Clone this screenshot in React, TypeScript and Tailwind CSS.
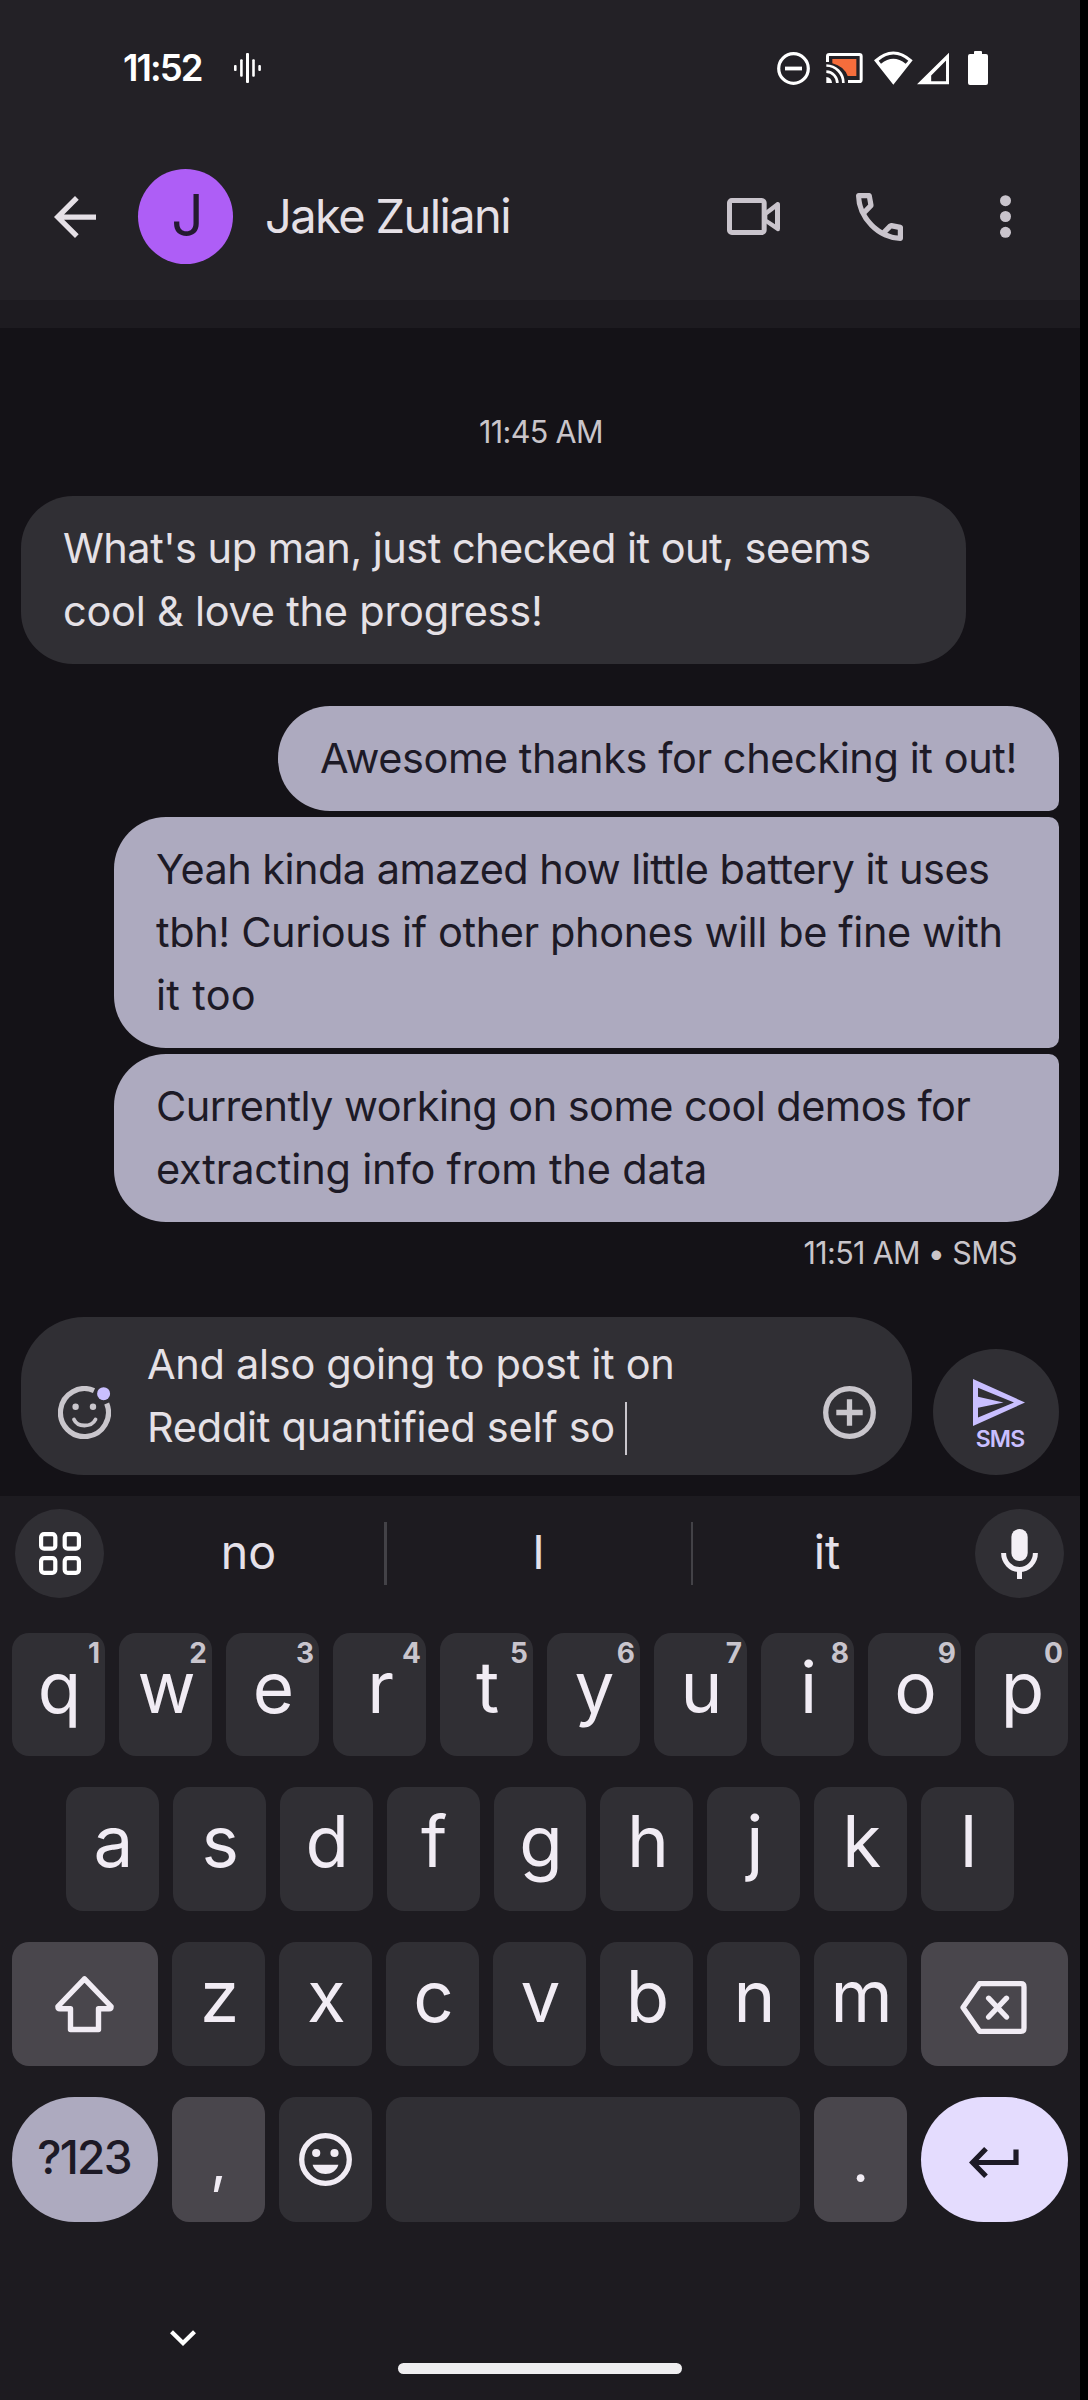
import React from 'react';

type Line = { text: string; tracking: string };

function Lines({ lines }: { lines: Line[] }) {
  return (
    <>
      {lines.map((l) => (
        <div key={l.text} className={`whitespace-nowrap text-[41.5px] leading-[63px] ${l.tracking}`}>
          {l.text}
        </div>
      ))}
    </>
  );
}

function StatusBar() {
  return (
    <div className="flex h-[136px] items-center pl-[123px] text-white">
      <span className="w-[79px] whitespace-nowrap text-[36.5px] leading-[40px] font-semibold tracking-[-1.9px]">11:52</span>
      <svg className="ml-[31.5px] h-[30px] w-[27px]" viewBox="0 0 27 30" fill="currentColor">
        <rect x="0" y="12" width="2.6" height="6" rx="1" />
        <rect x="6.1" y="6.3" width="2.6" height="17.4" rx="1" />
        <rect x="12" y="0" width="3" height="30" rx="1" />
        <rect x="18.2" y="6.3" width="2.6" height="17.4" rx="1" />
        <rect x="24.3" y="12" width="2.6" height="6" rx="1" />
      </svg>
      <svg className="ml-[516.5px] h-[33px] w-[33px]" viewBox="0 0 33 33" fill="none" stroke="currentColor" strokeWidth="3.2">
        <circle cx="16.5" cy="16.5" r="14.8" />
        <path d="M8 16.5H25" strokeWidth="3.8" />
      </svg>
      <svg className="ml-[16px] h-[30px] w-[37px]" viewBox="198 39 111 90" fill="none" stroke="currentColor" strokeWidth="9">
        <path d="M202.500 66V49Q202.500 43.500 208 43.500H298Q303.500 43.500 303.500 49V119Q303.500 124.500 298 124.500H264" />
        <path d="M217 57H289V108H263Q252 79 217 70Z" fill="#f56d3c" stroke="none" />
        <path d="M199 76.500A52 52 0 0 1 250 129M199 95A34 34 0 0 1 232 129" strokeWidth="8" />
        <path d="M199 111A18 18 0 0 1 216 129H199Z" fill="currentColor" stroke="none" />
      </svg>
      <svg className="mb-[1px] ml-[11px] h-[34px] w-[39px]" viewBox="343 29 117 102" fill="currentColor" fillRule="evenodd">
        <path d="M401 130L343 57Q401 4 459 57ZM357 58L364 67Q401 37 438 67L446 58Q401 21 357 58Z" />
      </svg>
      <svg className="ml-[4px] h-[33px] w-[32px]" viewBox="470 33 97 96" fill="currentColor" fillRule="evenodd">
        <path d="M567 33V129H470ZM558 57L513 102V120H558Z" />
      </svg>
      <svg className="mb-[1px] ml-[19px] h-[34px] w-[20px]" viewBox="0 0 20 34" fill="currentColor">
        <path d="M6 3V1Q6 0 7 0H13Q14 0 14 1V3H18Q20 3 20 5V32Q20 34 18 34H2Q0 34 0 32V5Q0 3 2 3Z" />
      </svg>
    </div>
  );
}

function AppBar() {
  return (
    <div className="flex h-[164px] items-start text-[#c9c4cc]">
      <svg className="mt-[60px] ml-[54px] h-[42px] w-[42px] text-[#e5e0e6]" viewBox="4 4 16 16" fill="currentColor">
        <path d="M20 11H7.830l5.590-5.590L12 4l-8 8 8 8 1.410-1.410L7.830 13H20v-2z" />
      </svg>
      <div className="mt-[33px] ml-[42px] flex h-[95px] w-[95px] items-center justify-center rounded-full bg-[#ae5ef6]">
        <span className="pb-[1px] pl-[4px] text-[57px] leading-[60px] text-[#241a30]">J</span>
      </div>
      <span className="mt-[50px] ml-[32px] w-[462px] whitespace-nowrap text-[47px] leading-[60px] tracking-[-1.6px] text-[#e5e0e6]">
        Jake Zuliani
      </span>
      <svg className="mt-[62px] h-[37px] w-[53px]" viewBox="54 54 159 111" fill="none" stroke="currentColor" strokeWidth="15">
        <rect x="61.5" y="61.5" width="104" height="96" rx="7" />
        <path
          d="M165 96L204 66Q213 64 213 74V146Q213 156 204 153L165 126ZM175 105V118L198 133V88Z"
          fill="currentColor"
          fillRule="evenodd"
          stroke="none"
        />
      </svg>
      <svg className="mt-[57px] ml-[76px] h-[48px] w-[47px]" viewBox="120 -840 720 720" preserveAspectRatio="none" fill="currentColor">
        <path d="M798-120q-125 0-247-54.500T329-329Q229-429 174.500-551T120-798q0-18 12-30t30-12h162q14 0 25 9.500t13 22.500l26 140q2 16-1 27t-11 19l-97 98q20 37 47.500 71.500T387-386q31 31 65 57.500t72 48.500l94-94q9-9 23.500-13.500T670-390l138 28q14 4 23 14.500t9 23.500v162q0 18-12 30t-30 12ZM241-600l66-66-17-94h-89q5 41 14 81t26 79Zm358 358q39 17 79.500 27t81.500 13v-88l-94-19-67 67Z" />
      </svg>
      <svg className="mt-[59px] ml-[97px] h-[43px] w-[11px]" viewBox="0 0 11 43" fill="currentColor">
        <circle cx="5.500" cy="5.700" r="5.500" />
        <circle cx="5.500" cy="21.500" r="5.500" />
        <circle cx="5.500" cy="37.300" r="5.500" />
      </svg>
    </div>
  );
}

function Conversation() {
  return (
    <div className="flex h-[989px] flex-col bg-[#141217] pr-[21px] pl-[21px]">
      <div className="mt-[84px] h-[84px] pl-[2px] text-center text-[30.5px] leading-[40px] tracking-[-0.65px] text-[#c9c5ca]">
        11:45 AM
      </div>
      <div className="w-[945px] rounded-[52px] bg-[#302f34] px-[42px] py-[21px] text-[#e5e1e6]">
        <Lines
          lines={[
            { text: "What's up man, just checked it out, seems", tracking: 'tracking-[-0.53px]' },
            { text: 'cool & love the progress!', tracking: 'tracking-[-0.24px]' },
          ]}
        />
      </div>
      <div className="mt-[42px] flex flex-col items-end gap-[6px] text-[#1d1a26]">
        <div className="w-[781px] rounded-[52px] rounded-br-[10px] bg-[#adaabf] px-[42px] py-[21px]">
          <Lines lines={[{ text: 'Awesome thanks for checking it out!', tracking: 'tracking-[-0.42px]' }]} />
        </div>
        <div className="w-[945px] rounded-l-[52px] rounded-r-[10px] bg-[#adaabf] px-[42px] py-[21px]">
          <Lines
            lines={[
              { text: 'Yeah kinda amazed how little battery it uses', tracking: 'tracking-[-0.56px]' },
              { text: 'tbh! Curious if other phones will be fine with', tracking: 'tracking-[-0.4px]' },
              { text: 'it too', tracking: 'tracking-[0.3px]' },
            ]}
          />
        </div>
        <div className="w-[945px] rounded-[52px] rounded-tr-[10px] bg-[#adaabf] px-[42px] py-[21px]">
          <Lines
            lines={[
              { text: 'Currently working on some cool demos for', tracking: 'tracking-[-0.56px]' },
              { text: 'extracting info from the data', tracking: 'tracking-[-0.18px]' },
            ]}
          />
        </div>
      </div>
      <div className="mt-[11px] pr-[42px] text-right text-[30.5px] leading-[40px] tracking-[-0.66px] text-[#c9c5ca]">
        11:51 AM • SMS
      </div>
    </div>
  );
}

function Composer() {
  return (
    <div className="flex h-[179px] items-start bg-[#141217] pl-[21px]">
      <div className="flex h-[158px] w-[891px] rounded-[63px] bg-[#302f34] text-[#c9c6cc]">
        <svg className="mt-[69px] ml-[37px] h-[53px] w-[53px]" viewBox="0 0 53 53" fill="none" stroke="currentColor" strokeWidth="5.2">
          <path d="M36 4.600A24 24 0 1 0 48.700 17.600" />
          <circle cx="17.600" cy="20.700" r="3.200" fill="currentColor" stroke="none" />
          <circle cx="35" cy="20.700" r="3.200" fill="currentColor" stroke="none" />
          <path d="M16 33.500C19.500 41.500 33.500 41.500 37.500 33.500" strokeWidth="3.800" strokeLinecap="round" />
          <circle cx="45.600" cy="7.700" r="6.500" fill="#c9bfff" stroke="none" />
        </svg>
        <div className="mt-[15.5px] ml-[36px] w-[676px] text-[#e5e1e6]">
          <Lines lines={[{ text: 'And also going to post it on', tracking: 'tracking-[-0.3px]' }]} />
          <div className="flex">
            <Lines lines={[{ text: 'Reddit quantified self so', tracking: 'tracking-[-0.26px]' }]} />
            <span className="mt-[6px] ml-[10px] h-[53px] w-[2px] bg-[#c9c6cc]" />
          </div>
        </div>
        <svg className="mt-[69px] h-[53px] w-[53px]" viewBox="0 0 53 53" fill="none" stroke="currentColor" strokeWidth="5.300">
          <circle cx="26.500" cy="26.500" r="23.800" />
          <path d="M13.300 26.500H39.700M26.500 13.200V39.800" />
        </svg>
      </div>
      <div className="mt-[32px] ml-[21px] flex h-[126px] w-[126px] flex-col items-center rounded-full bg-[#302f34] text-[#c9bfff]">
        <svg className="mt-[30px] ml-[6px] h-[47px] w-[52px] shrink-0" viewBox="0 0 52 47" fill="currentColor" fillRule="evenodd">
          <path d="M0 0L52 23.500L0 47ZM5 8.800V17.700L30.500 23.500L5 28.700V38.500L41 23.500Z" />
        </svg>
        <span className="ml-[8px] text-[23px] leading-[26px] font-semibold tracking-[-0.8px]">SMS</span>
      </div>
    </div>
  );
}

function Suggestions() {
  return (
    <div className="flex h-[137px] items-start pl-[15px] text-[46.5px] leading-[60px] text-[#e5e1e9]">
      <div className="mt-[13px] flex h-[89px] w-[89px] items-center justify-center rounded-full bg-[#302f34] text-white">
        <svg className="h-[43px] w-[42px]" viewBox="0 0 42 43" fill="none" stroke="currentColor" strokeWidth="4.200">
          <rect x="2.100" y="2.100" width="14.200" height="14.600" rx="3" />
          <rect x="25.700" y="2.100" width="14.200" height="14.600" rx="3" />
          <rect x="2.100" y="26.200" width="14.200" height="14.600" rx="3" />
          <rect x="25.700" y="26.200" width="14.200" height="14.600" rx="3" />
        </svg>
      </div>
      <span className="mt-[26px] w-[280px] pl-[9px] text-center">no</span>
      <span className="mt-[26px] h-[63px] w-[2.5px] bg-[#434247]" />
      <span className="mt-[26px] w-[304px] text-center">I</span>
      <span className="mt-[26px] h-[63px] w-[2.5px] bg-[#434247]" />
      <span className="mt-[26px] w-[268px] text-center">it</span>
      <div className="mt-[13px] ml-[14px] flex h-[89px] w-[89px] items-center justify-center rounded-full bg-[#302f34] text-[#f3eff5]">
        <svg className="h-[50px] w-[37px]" viewBox="0 0 37 50" fill="currentColor">
          <rect x="10.400" y="0" width="16.300" height="32" rx="8.100" />
          <path d="M2.600 24A15.900 16.500 0 0 0 34.400 24" fill="none" stroke="currentColor" strokeWidth="5" />
          <rect x="16" y="40" width="5" height="10" />
        </svg>
      </div>
    </div>
  );
}

function LetterKey({ label, hint }: { label: string; hint?: string }) {
  return (
    <div className="relative h-full flex-1 rounded-[17px] bg-[#302f34] pl-[2px] text-center text-[71px] leading-[108px] text-[#f1ecf4]">
      {label}
      {hint && (
        <span className="absolute top-0 right-[5px] text-[28px] leading-[41px] font-bold text-[#c9c5cd]">{hint}</span>
      )}
    </div>
  );
}

function Keyboard() {
  return (
    <div className="flex flex-col gap-[31px] px-[12px] text-[#f1ecf4]">
      <div className="flex h-[123px] gap-[14px]">
        {'qwertyuiop'.split('').map((c, i) => (
          <LetterKey key={c} label={c} hint={'1234567890'[i]} />
        ))}
      </div>
      <div className="flex h-[124px] gap-[14px] px-[54px]">
        {'asdfghjkl'.split('').map((c) => (
          <LetterKey key={c} label={c} />
        ))}
      </div>
      <div className="flex h-[124px] gap-[14px]">
        <div className="w-[146px] shrink-0 rounded-[17px] bg-[#49464c] pt-[33px] pl-[43px]">
          <svg className="h-[58px] w-[59px]" viewBox="0 0 59 58" fill="none" stroke="currentColor" strokeWidth="5.400" strokeLinejoin="round">
            <path d="M29.500 3.800L2.900 31.500Q2.900 33.800 5 33.800H15.500V54.500H43.500V33.800H54Q56.100 33.800 56.100 31.500Z" />
          </svg>
        </div>
        {'zxcvbnm'.split('').map((c) => (
          <LetterKey key={c} label={c} />
        ))}
        <div className="w-[147px] shrink-0 rounded-[17px] bg-[#49464c] pt-[38.5px] pl-[39px]">
          <svg className="h-[53px] w-[67px]" viewBox="0 0 67 53" fill="none" stroke="currentColor" strokeWidth="5.300" strokeLinejoin="round" strokeLinecap="round">
            <path d="M19.500 2.700H61Q64 2.700 64 6V47Q64 50.300 61 50.300H19.500L3 26.500Z" />
            <path d="M28.600 17.200L46.500 36M46.500 17.200L28.600 36" />
          </svg>
        </div>
      </div>
      <div className="flex h-[125px] gap-[14px]">
        <div className="w-[146px] shrink-0 rounded-[63px] bg-[#adaabf] pr-[2px] text-center text-[46px] leading-[121px] font-medium tracking-[-1.7px] text-[#1d1a26]">
          ?123
        </div>
        <div className="w-[93px] shrink-0 rounded-[17px] bg-[#49464c] text-center text-[58px] leading-[129px]">,</div>
        <div className="w-[93px] shrink-0 rounded-[17px] bg-[#302f34] pt-[36px] pl-[20px]">
          <svg className="h-[53px] w-[53px]" viewBox="0 0 53 53" fill="currentColor">
            <circle cx="26.500" cy="26.500" r="23.800" fill="none" stroke="currentColor" strokeWidth="5.300" />
            <circle cx="17.200" cy="20" r="4.100" />
            <circle cx="35.500" cy="20" r="4.100" />
            <path d="M13.600 31.700H39.400C36 44 17 44 13.600 31.700Z" />
          </svg>
        </div>
        <div className="flex-1 rounded-[17px] bg-[#302f34]" />
        <div className="w-[93px] shrink-0 rounded-[17px] bg-[#49464c] text-center text-[58px] leading-[129px]">.</div>
        <div className="w-[147px] shrink-0 rounded-[63px] bg-[#e4dcfe] pt-[49.5px] pl-[47.5px] text-[#1d1a26]">
          <svg className="h-[31px] w-[50px]" viewBox="0 0 50 31" fill="none" stroke="currentColor" strokeWidth="5.200">
            <path d="M47 2.500V15.500H5M17 1.800L3.600 15.500L17 29.200" />
          </svg>
        </div>
      </div>
    </div>
  );
}

export default function App() {
  return (
    <div className="h-[2400px] w-[1088px] overflow-hidden bg-black font-[Inter,sans-serif]">
      <div className="flex h-full w-[1080px] flex-col bg-[#1d1b20]">
        <div className="h-[300px] bg-[#232126]">
          <StatusBar />
          <AppBar />
        </div>
        <div className="h-[28px] shrink-0" />
        <Conversation />
        <Composer />
        <Suggestions />
        <Keyboard />
        <div className="mt-[108px] ml-[170px] h-[33px]">
          <svg className="h-[16px] w-[26px] text-white" viewBox="0 0 26 16" fill="none" stroke="currentColor" strokeWidth="4.200">
            <path d="M1.500 1.700L13 13L24.500 1.700" />
          </svg>
        </div>
        <div className="ml-[398px] h-[11px] w-[284px] rounded-full bg-[#efeef0]" />
      </div>
    </div>
  );
}
